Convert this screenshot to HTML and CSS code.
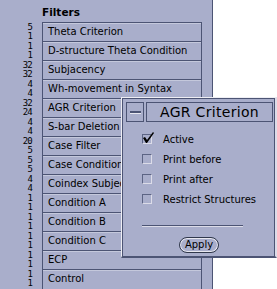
FILE: index.html
```html
<!DOCTYPE html>
<html>
<head>
<meta charset="utf-8">
<link rel="stylesheet" href="styles.css">
</head>
<body>
<div class="panel">
  <div class="title">Filters</div>
  <div class="body">
    <div class="nums">
      <div>5</div><div>1</div><div>1</div><div>1</div>
      <div>32</div><div>32</div><div>4</div><div>4</div>
      <div>32</div><div>24</div><div>4</div><div>4</div>
      <div>20</div><div>5</div><div>5</div><div>5</div>
      <div>4</div><div>4</div><div>1</div><div>1</div>
      <div>1</div><div>1</div><div>1</div><div>1</div>
      <div>1</div><div>1</div><div>1</div><div>1</div>
    </div>
    <ul class="list">
      <li>Theta Criterion</li>
      <li>D-structure Theta Condition</li>
      <li>Subjacency</li>
      <li>Wh-movement in Syntax</li>
      <li>AGR Criterion</li>
      <li>S-bar Deletion</li>
      <li>Case Filter</li>
      <li>Case Condition</li>
      <li>Coindex Subject</li>
      <li>Condition A</li>
      <li>Condition B</li>
      <li>Condition C</li>
      <li>ECP</li>
      <li>Control</li>
    </ul>
  </div>
</div>

<div class="popup">
  <div class="header">
    <div class="menu-btn"><span class="dash"></span></div>
    <div class="ptitle">AGR Criterion</div>
  </div>
  <div class="opts">
    <div class="opt">
      <span class="box checked">
        <svg width="13" height="12" viewBox="0 0 13 12"><path d="M1 6 L3 5 L5 8 L11 0 L12 1 L5 11 L4 11 Z" fill="#000"/></svg>
      </span>
      <span class="label">Active</span>
    </div>
    <div class="opt"><span class="box"></span><span class="label">Print before</span></div>
    <div class="opt"><span class="box"></span><span class="label">Print after</span></div>
    <div class="opt"><span class="box"></span><span class="label">Restrict Structures</span></div>
  </div>
  <div class="sep"></div>
  <div class="actions"><button class="apply">Apply</button></div>
</div>
</body>
</html>
```

FILE: styles.css
```css
html, body {
  margin: 0;
  padding: 0;
  background: #ffffff;
  width: 277px;
  height: 289px;
  overflow: hidden;
  font-family: "DejaVu Sans", sans-serif;
}

.panel {
  width: 213px;
  height: 289px;
  background: #a9aecb;
  border-right: 1px solid #4c5474;
  box-sizing: border-box;
}

.title {
  font-weight: bold;
  font-size: 10.5px;
  line-height: 12px;
  padding: 6px 0 0 42px;
  height: 16px;
  color: #000;
}

.body {
  display: flex;
  gap: 10px;
}

.nums {
  width: 32px;
  text-align: right;
  font-family: "DejaVu Sans Mono", monospace;
  font-size: 9px;
  letter-spacing: -0.8px;
  line-height: 9.5px;
  padding-top: 0.5px;
  color: #000;
}

.list {
  list-style: none;
  margin: 0;
  padding: 0;
  width: 160px;
  border-left: 1px solid #4c5474;
  border-right: 1px solid #4c5474;
  box-sizing: border-box;
}

.list li {
  height: 19px;
  box-sizing: border-box;
  border-top: 1px solid #4c5474;
  box-shadow: inset 0 1px 0 #c4c8dc;
  font-size: 10px;
  line-height: 18px;
  padding-left: 5px;
  white-space: nowrap;
  overflow: hidden;
  color: #000;
}

.popup {
  position: absolute;
  left: 121px;
  top: 97px;
  width: 156px;
  height: 161px;
  box-sizing: border-box;
  background: #a9aecb;
  border-top: 1px solid #eeeef4;
  border-left: 1px solid #eeeef4;
  border-right: 2px solid #dcdce8;
  border-bottom: 2px solid #4c5474;
  box-shadow: inset 1px 1px 0 #4c5474, inset -1px 0 0 #4c5474;
}

.header {
  display: flex;
  gap: 2px;
  padding: 4px 2px 0 4px;
}

.menu-btn {
  width: 18px;
  height: 20px;
  box-sizing: border-box;
  border: 1px solid #4c5474;
  display: flex;
  align-items: center;
  justify-content: center;
}

.dash {
  width: 11px;
  height: 2px;
  background: #4c5474;
  box-shadow: 0 1px 0 #e8e8f0;
}

.ptitle {
  flex: 1;
  height: 20px;
  box-sizing: border-box;
  border: 1px solid #4c5474;
  font-size: 14px;
  letter-spacing: 0.3px;
  line-height: 18px;
  text-align: center;
  color: #000;
}

.opts {
  padding: 7px 0 0 20px;
}

.opt {
  display: flex;
  align-items: center;
  height: 20px;
}

.box {
  position: relative;
  width: 10px;
  height: 10px;
  box-sizing: border-box;
  border-top: 1px solid #5c6484;
  border-left: 1px solid #5c6484;
  border-right: 1px solid #dcdce8;
  border-bottom: 1px solid #dcdce8;
  margin-right: 11px;
}

.box svg {
  position: absolute;
  left: -1px;
  top: -3px;
}

.label {
  font-size: 10px;
  color: #000;
}

.sep {
  margin: 16px 0 0 20px;
  width: 101px;
  height: 1px;
  background: #4c5474;
  box-shadow: 0 1px 0 #dcdce8;
}

.actions {
  display: flex;
  padding: 11px 0 0 57px;
}

.apply {
  font-family: "DejaVu Sans", sans-serif;
  font-size: 10px;
  height: 16px;
  width: 40px;
  padding: 0;
  line-height: 12px;
  color: #000;
  background: #a9aecb;
  border: 1px solid #30384c;
  border-radius: 8px;
  box-shadow: inset 0 0 0 1px #e8e8f0;
}
```
